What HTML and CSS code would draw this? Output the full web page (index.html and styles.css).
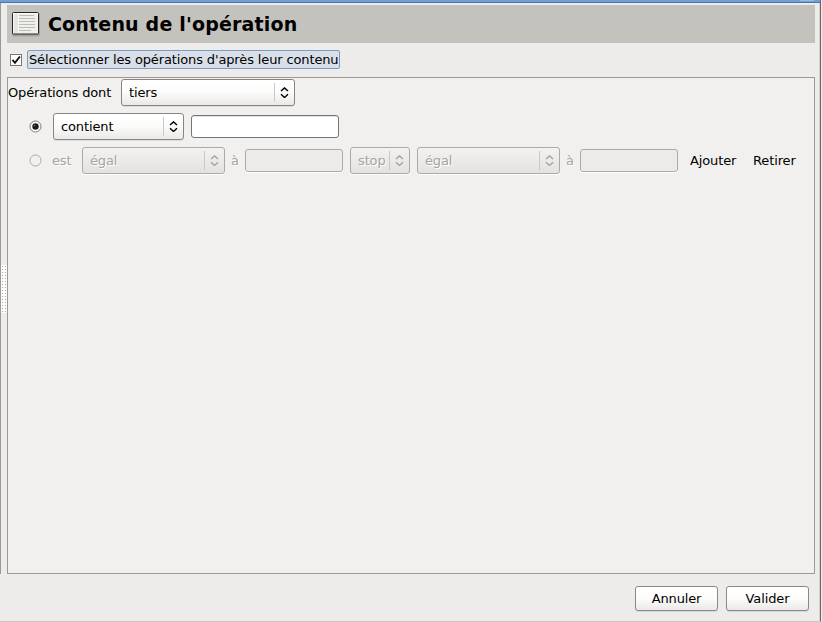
FILE: index.html
```html
<!DOCTYPE html>
<html lang="fr">
<head>
<meta charset="utf-8">
<title>Contenu de l'opération</title>
<link rel="stylesheet" href="styles.css">
</head>
<body>
<svg width="0" height="0" class="defs">
  <symbol id="arrows" viewBox="0 0 9 11"><path d="M1 4.1 4.5.9 8 4.1M1 7.3l3.5 3.2L8 7.3" fill="none" stroke="currentColor" stroke-width="1.4"/></symbol>
</svg>
<div class="window">
  <div class="titlebar"><i></i></div>
  <div class="main">
    <div class="handle"><i></i></div>
    <div class="content">
      <header class="header">
        <svg width="30" height="26" viewBox="0 0 30 26">
          <rect x="1" y="2" width="28" height="23.5" rx="2" fill="#a5a49f"/>
          <rect x="1.5" y="1.5" width="26" height="21.5" rx="1" fill="#fafaf9" stroke="#242422"/>
          <path d="M3 3h4v19H3z" fill="#e4e4e0"/>
          <path d="M8 3h18v19H8z" fill="#efefec"/>
          <path d="M8 4.5h15M8 7.5h16M8 10.5h16M8 13.5h16M8 16.5h16M8 19.5h12" stroke="#bcbcb8"/>
        </svg>
        <h1>Contenu de l'opération</h1>
      </header>
      <div class="enable">
        <svg class="check" width="13" height="13" viewBox="0 0 13 13"><rect x=".5" y=".5" width="11" height="11" fill="#fff" stroke="#777"/><path d="M2.5 5.8 5 8.8 9.9 2.5" fill="none" stroke="#111" stroke-width="1.9"/></svg>
        <label class="focus">Sélectionner les opérations d'après leur contenu</label>
      </div>
      <div class="frame">
        <div class="row first">
          <span class="label dont">Opérations dont</span>
          <div class="combo w174"><span>tiers</span><b></b><svg><use href="#arrows"/></svg></div>
        </div>
        <div class="row second">
          <svg class="radio" width="13" height="13" viewBox="0 0 13 13"><circle cx="6.5" cy="6.5" r="5.5" fill="#fff" stroke="#777"/><circle cx="6.5" cy="6.5" r="3.2" fill="#1c1c1c"/><circle cx="5.5" cy="5.5" r=".8" fill="#777"/></svg>
          <div class="combo w131"><span>contient</span><b></b><svg><use href="#arrows"/></svg></div>
          <div class="input w148"></div>
        </div>
        <div class="row third off">
          <svg class="radio" width="13" height="13" viewBox="0 0 13 13"><circle cx="6.5" cy="6.5" r="5.5" fill="#f1f0ee" stroke="#aaa9a7"/></svg>
          <span class="label est">est</span>
          <div class="combo w143"><span>égal</span><b></b><svg><use href="#arrows"/></svg></div>
          <span class="label a">à</span>
          <div class="input w98"></div>
          <div class="combo w60"><span>stop</span><b></b><svg><use href="#arrows"/></svg></div>
          <div class="combo w143"><span>égal</span><b></b><svg><use href="#arrows"/></svg></div>
          <span class="label a">à</span>
          <div class="input w98"></div>
          <span class="link add">Ajouter</span>
          <span class="link">Retirer</span>
        </div>
      </div>
    </div>
  </div>
  <footer class="footer">
    <div class="button">Annuler</div>
    <div class="button">Valider</div>
  </footer>
</div>
</body>
</html>
```
FILE: styles.css
```css
* { box-sizing: border-box; }
body { margin: 0; width: 822px; height: 622px; overflow: hidden; background: #f0efee; font: 13px/16px "DejaVu Sans", sans-serif; letter-spacing: -0.13px; color: #000; }
.defs { display: block; }
.window { width: 821px; height: 622px; background: #edeceb; border-right: 1px solid #6b6664; border-bottom: 1px solid #c9c7c5; display: flex; flex-direction: column; box-shadow: inset -1px 0 #d5d2d0; }
.titlebar { height: 3px; flex: none; background: #729fd2; border-bottom: 1px solid #4377b5; display: flex; justify-content: flex-end; }
.titlebar i { width: 14px; height: 1px; margin-right: 6px; background: #9bbde2; }
.main { height: 571px; display: flex; border-left: 1px solid #9a9896; padding-right: 5px; }
.handle { width: 6px; flex: none; display: flex; align-items: center; }
.handle i { width: 6px; height: 48px; margin-top: 1px; background: radial-gradient(circle at 1.5px 1.5px, #aaa8a5 0 .7px, #fbfbfa .8px) 0 0 / 3px 3px; }
.content { width: 808px; padding-top: 2px; display: flex; flex-direction: column; }
.header { height: 38px; background: #c4c2bc; display: flex; align-items: center; padding-left: 4px; }
h1 { margin: 0 0 0 7px; font-size: 19px; line-height: 24px; letter-spacing: .18px; }
.enable { height: 34px; display: flex; padding: 7px 0 0 3px; }
.check { margin-top: 4px; }
.focus { height: 19px; width: 313px; margin-left: 4px; padding-left: 1px; border: 1px solid #7c9ac2; border-radius: 2px; background: #d9dfe9; line-height: 17px; white-space: nowrap; }
.frame { height: 497px; border: 1px solid #9c9a98; background: #f1f0ee; padding-top: 1px; }
.row { height: 34px; display: flex; align-items: flex-start; white-space: nowrap; }
.label, .link { line-height: 27px; }
.first .combo { margin-left: 10px; }
.dont { width: 103px; }
.radio { margin: 7px 11px 0 21px; }
.off .radio { margin-right: 10px; }
.combo { height: 27px; border: 1px solid #888684; border-radius: 3px; background: linear-gradient(#fff, #fcfcfb 45%, #eae9e7); display: flex; align-items: center; padding: 0 5px 0 7px; box-shadow: 0 1px #dddcda; }
.combo span { flex: 1; line-height: 25px; }
.combo b { width: 1px; height: 19px; background: #cbc9c6; margin-right: 5px; }
.combo svg { width: 9px; height: 11px; }
.w174 { width: 174px; } .w131 { width: 131px; } .w143 { width: 143px; } .w60 { width: 60px; } .w148 { width: 148px; } .w98 { width: 98px; }
.input { height: 23px; margin: 2px 0 0 7px; border: 1px solid #777573; border-radius: 3px; background: #fff; box-shadow: inset 0 1px #e5e4e2; }
.off { color: #a6a4a2; text-shadow: 1px 1px #fff; }
.off .combo { background: linear-gradient(#f3f2f1, #e3e2df); border-color: #acaaa7; box-shadow: 0 1px #fff; }
.off .input { background: #ecebe9; border-color: #acaaa7; box-shadow: 0 1px #fff; }
.off .w60, .off .w60 + .combo { margin-left: 7px; }
.est { width: 30px; }
.a { width: 7px; margin-left: 6px; }
.link { width: 47px; color: #000; text-shadow: none; margin-left: 16px; }
.add { margin-left: 12px; }
.footer { flex: 1; display: flex; gap: 8px; justify-content: flex-end; padding: 12px 11px 0 0; }
.button { width: 83px; height: 25px; border: 1px solid #8b8987; border-radius: 3px; text-align: center; line-height: 23px; background: linear-gradient(#fff, #fcfcfb 50%, #eae9e7); box-shadow: 0 1px #d8d6d4; }
```
